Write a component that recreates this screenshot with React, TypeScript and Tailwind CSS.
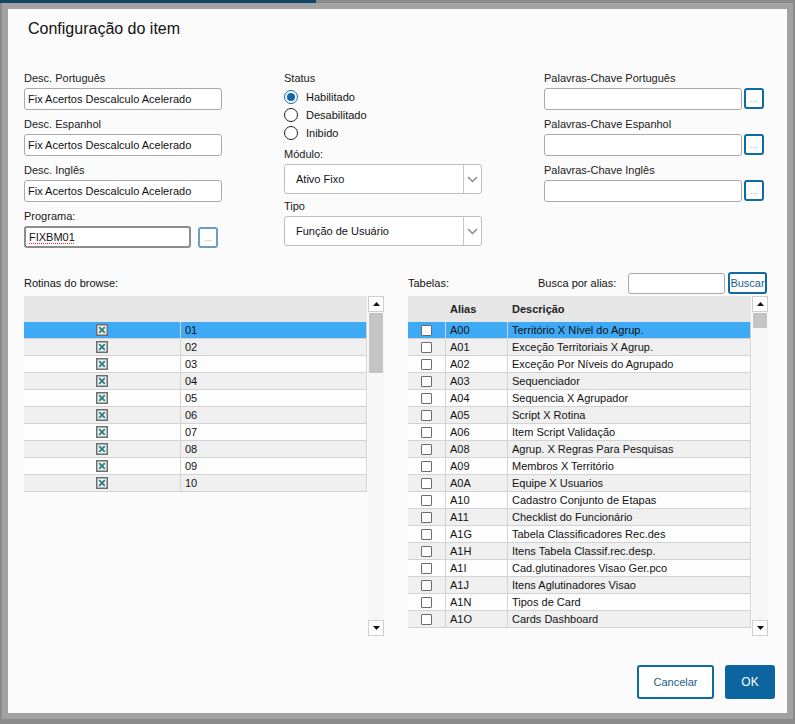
import React from "react";

const rotinas = ["01", "02", "03", "04", "05", "06", "07", "08", "09", "10"];

const tabelas: [string, string][] = [
  ["A00", "Território X Nível do Agrup."],
  ["A01", "Exceção Territoriais X Agrup."],
  ["A02", "Exceção Por Níveis do Agrupado"],
  ["A03", "Sequenciador"],
  ["A04", "Sequencia X Agrupador"],
  ["A05", "Script X Rotina"],
  ["A06", "Item Script Validação"],
  ["A08", "Agrup. X Regras Para Pesquisas"],
  ["A09", "Membros X Território"],
  ["A0A", "Equipe X Usuarios"],
  ["A10", "Cadastro Conjunto de Etapas"],
  ["A11", "Checklist do Funcionário"],
  ["A1G", "Tabela Classificadores Rec.des"],
  ["A1H", "Itens Tabela Classif.rec.desp."],
  ["A1I", "Cad.glutinadores Visao Ger.pco"],
  ["A1J", "Itens Aglutinadores Visao"],
  ["A1N", "Tipos de Card"],
  ["A1O", "Cards Dashboard"],
];

const Label = ({ children }: { children: React.ReactNode }) => (
  <div className="h-[14px] text-[11px] leading-[14px] text-[#1a1a1a]">{children}</div>
);

const DotsButton = ({ light }: { light?: boolean }) => (
  <div
    className={`flex h-[21px] w-[20px] items-end justify-center rounded-[3px] border-2 bg-white pb-[3px] text-[9px] leading-[9px] text-[#8fa6bf] ${
      light ? "border-[#6b9cc2]" : "border-[#0f6aa3]"
    }`}>
    ...
  </div>
);

const TextInput = ({ value, width = "w-[198px]" }: { value?: string; width?: string }) => (
  <div
    className={`flex h-[22px] ${width} items-center rounded-[3px] border border-[#a9a9a9] bg-white px-[3px] text-[11px] text-[#111]`}>
    {value}
  </div>
);

const Field = ({ label, value, first }: { label: string; value: string; first?: boolean }) => (
  <div className={first ? "" : "mt-[7px]"}>
    <Label>{label}</Label>
    <div className="mt-[3px]">
      <TextInput value={value} />
    </div>
  </div>
);

const KeywordField = ({ label, first }: { label: string; first?: boolean }) => (
  <div className={first ? "" : "mt-[7px]"}>
    <Label>{label}</Label>
    <div className="mt-[3px] flex items-start gap-[2px]">
      <TextInput />
      <DotsButton />
    </div>
  </div>
);

const Radio = ({ label, checked }: { label: string; checked?: boolean }) => (
  <div className="flex h-[18px] items-center gap-[8px]">
    {checked ? (
      <div className="flex h-[14px] w-[14px] items-center justify-center rounded-full border-[1.5px] border-[#0f6aa3] bg-white">
        <div className="h-[8px] w-[8px] rounded-full bg-[#0f6aa3]" />
      </div>
    ) : (
      <div className="h-[14px] w-[14px] rounded-full border border-[#222] bg-white" />
    )}
    <span className="text-[11px] text-[#111]">{label}</span>
  </div>
);

const Select = ({ value }: { value: string }) => (
  <div className="flex h-[30px] w-[198px] rounded-[3px] border border-[#bdbdbd] bg-white">
    <div className="flex flex-1 items-center pl-[11px] text-[11px] text-[#111]">{value}</div>
    <div className="flex w-[18px] items-center justify-center border-l border-[#c8c8c8]">
      <svg width="11" height="7" viewBox="0 0 11 7">
        <path d="M1 1l4.5 4.5L10 1" fill="none" stroke="#8a8a8a" strokeWidth="1.5" />
      </svg>
    </div>
  </div>
);

const XCheck = () => (
  <svg width="12" height="12" viewBox="0 0 12 12">
    <rect x="0.75" y="0.75" width="10.5" height="10.5" fill="#eef3f3" stroke="#6f6f6f" strokeWidth="1.5" />
    <path d="M3.2 3.2l5.6 5.6M8.8 3.2l-5.6 5.6" stroke="#2e8081" strokeWidth="1.9" />
  </svg>
);

const EmptyCheck = () => (
  <div className="h-[11px] w-[11px] rounded-[1px] border border-[#6b6b6b] bg-white" />
);

const Scrollbar = ({ thumb }: { thumb: string }) => (
  <div className="flex h-full w-[16px] flex-col bg-[#f7f7f8]">
    <div className="flex h-[16px] items-center justify-center border border-[#cfcfcf] bg-white">
      <svg width="7" height="4" viewBox="0 0 7 4">
        <path d="M0 4L3.5 0L7 4z" fill="#111" />
      </svg>
    </div>
    <div className={`mx-[1px] mt-[1px] ${thumb} bg-[#c4c4c4]`} />
    <div className="flex-1" />
    <div className="flex h-[16px] items-center justify-center border border-[#cfcfcf] bg-white">
      <svg width="7" height="4" viewBox="0 0 7 4">
        <path d="M0 0L3.5 4L7 0z" fill="#111" />
      </svg>
    </div>
  </div>
);

const rowBg = (i: number) => (i === 0 ? "bg-[#3eaaf6]" : i % 2 === 1 ? "bg-[#efefef]" : "bg-[#fdfdfd]");

export default function App() {
  return (
    <div className="flex h-[724px] w-[795px] flex-col overflow-hidden bg-[#8b8b8b] font-['Liberation_Sans',Arial,sans-serif]">
      <div className="flex h-[3px]">
        <div className="w-[316px] bg-[#0f4566]" />
      </div>
      <div className="ml-[2px] h-[716px] w-[791px] border-[6px] border-[#a2a2a2]">
        <div className="flex h-[704px] w-[779px] flex-col bg-[#fbfbfb] pl-[16px]">
          {/* Title */}
          <div className="ml-[4px] mt-[10px] h-[20px] text-[16px] leading-[20px] text-[#111]">
            Configuração do item
          </div>

          {/* Form */}
          <div className="mt-[32px] flex">
            <div className="w-[260px]">
              <Field first label="Desc. Português" value="Fix Acertos Descalculo Acelerado" />
              <Field label="Desc. Espanhol" value="Fix Acertos Descalculo Acelerado" />
              <Field label="Desc. Inglês" value="Fix Acertos Descalculo Acelerado" />
              <div className="mt-[7px]">
                <Label>Programa:</Label>
                <div className="mt-[3px] flex items-start gap-[7px]">
                  <div className="flex h-[22px] w-[167px] items-center rounded-[3px] border-2 border-[#8c8c8c] bg-white px-[3px] text-[11px] text-[#111]">
                    <span className="underline decoration-[#e03030] decoration-dotted underline-offset-2">FIXBM01</span>
                  </div>
                  <div className="mt-[1px]">
                    <DotsButton light />
                  </div>
                </div>
              </div>
            </div>

            <div className="w-[260px]">
              <Label>Status</Label>
              <div className="mt-[3px]">
                <Radio checked label="Habilitado" />
                <Radio label="Desabilitado" />
                <Radio label="Inibido" />
              </div>
              <div className="mt-[5px]">
                <Label>Módulo:</Label>
              </div>
              <div className="mt-[3px]">
                <Select value="Ativo Fixo" />
              </div>
              <div className="mt-[5px]">
                <Label>Tipo</Label>
              </div>
              <div className="mt-[3px]">
                <Select value="Função de Usuário" />
              </div>
            </div>

            <div>
              <KeywordField first label="Palavras-Chave Português" />
              <KeywordField label="Palavras-Chave Espanhol" />
              <KeywordField label="Palavras-Chave Inglês" />
            </div>
          </div>

          {/* Tables */}
          <div className="mt-[22px] flex gap-[24px]">
            <div className="w-[360px]">
              <div className="flex h-[26px] items-center text-[11px] text-[#111]">Rotinas do browse:</div>
              <div className="flex h-[340px]">
                <div className="w-[343px] overflow-hidden">
                  <div className="h-[26px] bg-[#e6e6e6]" />
                  {rotinas.map((r, i) => (
                    <div
                      key={r}
                      className={`flex h-[17px] border-b border-r border-[#d3d3d3] text-[11px] text-[#111] ${rowBg(i)}`}>
                      <div className="flex w-[157px] items-center justify-center border-r border-[#d3d3d3]">
                        <XCheck />
                      </div>
                      <div className="flex items-center pl-[4px]">{r}</div>
                    </div>
                  ))}
                </div>
                <div className="ml-[1px]">
                  <Scrollbar thumb="h-[60px]" />
                </div>
              </div>
            </div>

            <div className="w-[360px]">
              <div className="flex h-[26px] items-center text-[11px] text-[#111]">
                <span className="w-[130px]">Tabelas:</span>
                <span className="w-[90px]">Busca por alias:</span>
                <div className="h-[21px] w-[97px] rounded-[3px] border border-[#a9a9a9] bg-white" />
                <div className="ml-[3px] flex h-[22px] w-[39px] items-center justify-center rounded-[3px] border-2 border-[#0f6aa3] bg-white text-[11px] text-[#1b5e8e]">
                  Buscar
                </div>
              </div>
              <div className="flex h-[340px]">
                <div className="w-[343px] overflow-hidden">
                  <div className="flex h-[26px] items-center bg-[#e6e6e6] text-[11px] font-bold text-[#222]">
                    <div className="w-[38px]" />
                    <div className="w-[62px] pl-[4px]">Alias</div>
                    <div className="pl-[4px]">Descrição</div>
                  </div>
                  {tabelas.map(([alias, desc], i) => (
                    <div
                      key={alias}
                      className={`flex h-[17px] border-b border-r border-[#d3d3d3] text-[11px] text-[#111] ${rowBg(i)}`}>
                      <div className="flex w-[38px] items-center justify-center border-r border-[#d3d3d3]">
                        <EmptyCheck />
                      </div>
                      <div className="flex w-[62px] items-center border-r border-[#d3d3d3] pl-[4px]">{alias}</div>
                      <div className="flex items-center pl-[4px]">{desc}</div>
                    </div>
                  ))}
                </div>
                <div className="ml-[1px]">
                  <Scrollbar thumb="h-[15px]" />
                </div>
              </div>
            </div>
          </div>

          {/* Buttons */}
          <div className="mt-[29px] flex justify-end gap-[11px] pr-[12px]">
            <button className="h-[34px] w-[77px] rounded-[3px] border-2 border-[#0f6aa3] bg-white text-[11px] text-[#1b5e8e]">
              Cancelar
            </button>
            <button className="h-[34px] w-[50px] rounded-[3px] bg-[#0d659f] text-[12px] text-white">OK</button>
          </div>
        </div>
      </div>
    </div>
  );
}
